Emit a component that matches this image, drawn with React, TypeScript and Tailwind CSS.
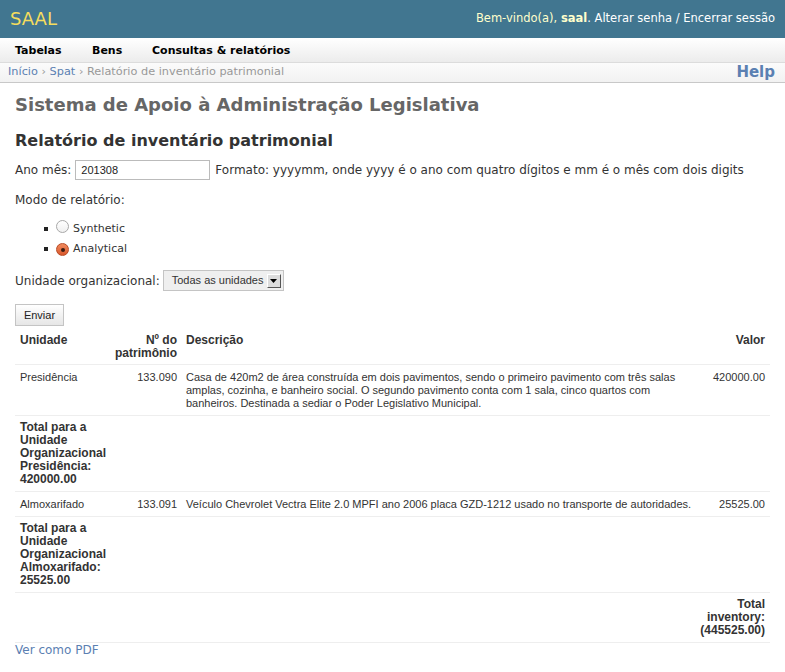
import React from "react";

function Radio({ checked }: { checked?: boolean }) {
  if (checked) {
    return (
      <span className="inline-flex h-[13px] w-[13px] items-center justify-center rounded-full border border-[#b84a24] bg-gradient-to-b from-[#f08a5d] to-[#d9572b]">
        <span className="h-[4px] w-[4px] rounded-full bg-[#3a1a10]" />
      </span>
    );
  }
  return (
    <span className="inline-block h-[13px] w-[13px] rounded-full border border-[#a8a8a8] bg-gradient-to-b from-white to-[#f0f0f0]" />
  );
}

export default function App() {
  const dv = "font-['DejaVu_Sans','Bitstream_Vera_Sans',Verdana,sans-serif]";
  const ar = "font-['Liberation_Sans',Arial,sans-serif]";
  return (
    <div className={`${dv} min-h-[672px] w-[785px] bg-white text-[#333]`}>
      {/* Header */}
      <div className="flex h-[38px] items-center justify-between bg-[#417690] pl-[10px] pr-[10px]">
        <div className="text-[18px] leading-none text-[#f5dd5d]">SAAL</div>
        <div className="text-[11.5px] text-[#ffc]">
          Bem-vindo(a), <span className="font-bold">saal</span>
          <span className="text-white">. Alterar senha / Encerrar sessão</span>
        </div>
      </div>
      {/* Nav */}
      <div className="flex h-[25px] items-center border-b border-[#dcdcdc] bg-gradient-to-b from-white to-[#ececec] pl-[15px] pt-[2px] text-[11px] font-bold text-black">
        <span className="w-[77px]">Tabelas</span>
        <span className="w-[60px]">Bens</span>
        <span>Consultas &amp; relatórios</span>
      </div>
      {/* Breadcrumb */}
      <div className="flex h-[20px] items-center justify-between border-b border-[#c8c8c8] bg-gradient-to-b from-[#fbfbfb] to-[#f2f2f2] pl-[8px] pr-[10px]">
        <div className="text-[11.3px] text-[#999]">
          <span className="text-[#5b80b2]">Início</span> › <span className="text-[#5b80b2]">Spat</span> › Relatório de inventário patrimonial
        </div>
        <div className="text-[15px] font-bold text-[#5b80b2]">Help</div>
      </div>
      {/* Content */}
      <div className="px-[15px]">
        <h1 className="mt-[11px] text-[18px] font-bold leading-[22px] text-[#666]">
          Sistema de Apoio à Administração Legislativa
        </h1>
        <h2 className="mt-[15px] text-[16px] font-bold leading-[20px] text-[#333]">
          Relatório de inventário patrimonial
        </h2>
        <div className="mt-[9px] flex h-[20px] items-center text-[12px]">
          <span>Ano mês:</span>
          <div className={`${ar} ml-[4px] flex h-[20px] w-[135px] items-center border border-[#bbb] px-[5px] text-[11px] text-[#222]`}>
            201308
          </div>
          <span className="ml-[5px]">Formato: yyyymm, onde yyyy é o ano com quatro dígitos e mm é o mês com dois digits</span>
        </div>
        <div className="mt-[12px] text-[12px] leading-[16px]">Modo de relatório:</div>
        <ul className="mt-[11px] text-[11px]">
          <li className="flex h-[20px] items-center">
            <span className="ml-[29px] h-[4px] w-[4px] bg-[#222]" />
            <span className="ml-[8px]"><Radio /></span>
            <span className="ml-[4px]">Synthetic</span>
          </li>
          <li className="flex h-[20px] items-center">
            <span className="ml-[29px] h-[4px] w-[4px] bg-[#222]" />
            <span className="ml-[8px]"><Radio checked /></span>
            <span className="ml-[4px]">Analytical</span>
          </li>
        </ul>
        <div className="mt-[11px] flex h-[21px] items-center text-[12px]">
          <span>Unidade organizacional:</span>
          <div className={`${ar} ml-[3px] flex h-[21px] w-[121px] items-center justify-between border border-[#c4c4c4] bg-[#efefef] pl-[8px] pr-[2px] text-[11px] text-[#333]`}>
            <span>Todas as unidades</span>
            <span className="flex h-[14px] w-[14px] items-center justify-center border-b border-l border-r border-t border-b-[#555] border-l-white border-r-[#555] border-t-white bg-[#dcdcdc]">
              <svg width="7" height="4" viewBox="0 0 7 4"><path d="M0 0h7L3.5 4z" fill="#000" /></svg>
            </span>
          </div>
        </div>
        <button className={`${ar} mt-[13px] flex h-[22px] w-[49px] items-center justify-center border border-[#c4c4c4] bg-gradient-to-b from-white to-[#e6e6e6] text-[11px] text-[#222]`}>
          Enviar
        </button>
        <table className={`${ar} mt-[2px] w-[755px] table-fixed border-collapse text-[#333]`}>
          <colgroup>
            <col className="w-[95px]" />
            <col className="w-[72px]" />
            <col className="w-[508px]" />
            <col className="w-[80px]" />
          </colgroup>
          <thead>
            <tr className="border-b border-[#eee] text-[12px] font-bold leading-[13px]">
              <th className="px-[5px] pt-[6px] pb-[4px] text-left align-top">Unidade</th>
              <th className="whitespace-nowrap px-[5px] pt-[6px] pb-[4px] text-right align-top">Nº do<br />patrimônio</th>
              <th className="px-[4px] pt-[6px] pb-[4px] text-left align-top">Descrição</th>
              <th className="px-[5px] pt-[6px] pb-[4px] text-right align-top">Valor</th>
            </tr>
          </thead>
          <tbody>
            <tr className="border-b border-[#eee] text-[11px] leading-[13px]">
              <td className="px-[5px] pt-[6px] pb-[5px] align-top">Presidência</td>
              <td className="px-[5px] pt-[6px] pb-[5px] text-right align-top">133.090</td>
              <td className="whitespace-nowrap px-[4px] pt-[6px] pb-[5px] align-top">
                Casa de 420m2 de área construída em dois pavimentos, sendo o primeiro pavimento com três salas<br />
                amplas, cozinha, e banheiro social. O segundo pavimento conta com 1 sala, cinco quartos com<br />
                banheiros. Destinada a sediar o Poder Legislativo Municipal.
              </td>
              <td className="px-[5px] pt-[6px] pb-[5px] text-right align-top">420000.00</td>
            </tr>
            <tr className="border-b border-[#eee] text-[12px] font-bold leading-[13px]">
              <td className="whitespace-nowrap px-[5px] py-[5px] align-top">
                Total para a<br />Unidade<br />Organizacional<br />Presidência:<br />420000.00
              </td>
              <td />
              <td />
              <td />
            </tr>
            <tr className="border-b border-[#eee] text-[11px] leading-[13px]">
              <td className="px-[5px] pt-[6px] pb-[5px] align-top">Almoxarifado</td>
              <td className="px-[5px] pt-[6px] pb-[5px] text-right align-top">133.091</td>
              <td className="whitespace-nowrap px-[4px] pt-[6px] pb-[5px] align-top">
                Veículo Chevrolet Vectra Elite 2.0 MPFI ano 2006 placa GZD-1212 usado no transporte de autoridades.
              </td>
              <td className="px-[5px] pt-[6px] pb-[5px] text-right align-top">25525.00</td>
            </tr>
            <tr className="border-b border-[#eee] text-[12px] font-bold leading-[13px]">
              <td className="whitespace-nowrap px-[5px] py-[5px] align-top">
                Total para a<br />Unidade<br />Organizacional<br />Almoxarifado:<br />25525.00
              </td>
              <td />
              <td />
              <td />
            </tr>
            <tr className="border-b border-[#eee] text-[12px] font-bold leading-[13px]">
              <td />
              <td />
              <td />
              <td className="whitespace-nowrap px-[5px] pt-[5px] pb-[5px] text-right align-top">
                Total<br />inventory:<br />(445525.00)
              </td>
            </tr>
          </tbody>
        </table>
        <div className="text-[12px] leading-[14px] text-[#5b80b2]">Ver como PDF</div>
      </div>
    </div>
  );
}
